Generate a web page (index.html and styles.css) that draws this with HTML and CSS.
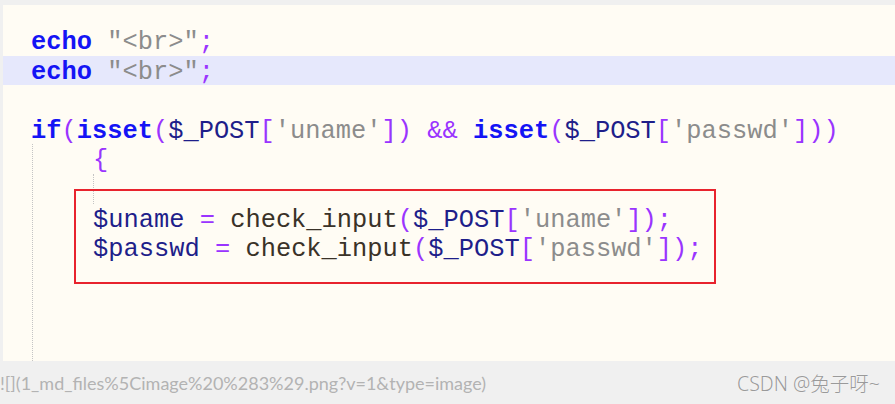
FILE: index.html
```html
<!DOCTYPE html>
<html>
<head>
<meta charset="utf-8">
<link rel="stylesheet" href="styles.css">
</head>
<body>
<div class="page">
  <div class="code">
    <div class="line"><span class="kw">echo</span> <span class="str">"&lt;br&gt;"</span><span class="op">;</span></div>
    <div class="line hl"><span class="kw">echo</span> <span class="str">"&lt;br&gt;"</span><span class="op">;</span></div>
    <div class="line"> </div>
    <div class="line"><span class="kw">if</span><span class="op">(</span><span class="kw">isset</span><span class="op">(</span><span class="var">$_POST</span><span class="op">[</span><span class="str">'uname'</span><span class="op">])</span> <span class="op">&amp;&amp;</span> <span class="kw">isset</span><span class="op">(</span><span class="var">$_POST</span><span class="op">[</span><span class="str">'passwd'</span><span class="op">]))</span></div>
    <div class="block">
      <div class="bline"><span class="op">{</span></div>
      <div class="bline guide"> </div>
      <div class="bline"><span class="var">$uname</span> <span class="op">=</span> <span class="fn">check_input</span><span class="op">(</span><span class="var">$_POST</span><span class="op">[</span><span class="str">'uname'</span><span class="op">]);</span></div>
      <div class="bline"><span class="var">$passwd</span> <span class="op">=</span> <span class="fn">check_input</span><span class="op">(</span><span class="var">$_POST</span><span class="op">[</span><span class="str">'passwd'</span><span class="op">]);</span></div>
    </div>
    <div class="mark"></div>
  </div>
  <div class="footer">
    <span class="path">![](1_md_files%5Cimage%20%283%29.png?v=1&amp;type=image)</span>
    <span class="wm">CSDN @兔子呀~</span>
  </div>
</div>
</body>
</html>
```

FILE: styles.css
```css
html, body {
  margin: 0;
  padding: 0;
  background: #f0f0f0;
}
.page {
  width: 895px;
  height: 404px;
  display: flex;
  flex-direction: column;
  padding: 5px 0 0 3px;
  box-sizing: border-box;
  overflow: hidden;
}
.code {
  position: relative;
  height: 356px;
  background: #fffcf4;
  padding-top: 21px;
  box-sizing: border-box;
  display: flex;
  flex-direction: column;
  font-family: "Liberation Mono", "Courier New", monospace;
  font-size: 25.4px;
  line-height: 29.6px;
  color: #3a3228;
}
.line {
  white-space: pre;
  padding-left: 28px;
  padding-top: 2px;
  height: 29.6px;
  box-sizing: border-box;
}
.hl {
  background: #e6e8fc;
}
.block {
  flex: 1;
  margin-left: 29px;
  border-left: 1px dotted #c4c4c4;
  padding-left: 60px;
}
.bline {
  white-space: pre;
  height: 29.6px;
  padding-top: 2px;
  box-sizing: border-box;
}
.guide {
  border-left: 1px dotted #c4c4c4;
  width: 0;
}
.kw { color: #1414f5; font-weight: bold; }
.str { color: #8c8c8c; }
.op { color: #9a34ff; }
.var { color: #1e1e8a; }
.fn { color: #3a3228; }
.mark {
  position: absolute;
  left: 71px;
  top: 184px;
  width: 642px;
  height: 95px;
  border: 2px solid #e8232d;
  box-sizing: border-box;
}
.footer {
  flex: 1;
  margin-left: -3px;
  display: flex;
  justify-content: space-between;
  align-items: center;
  padding: 0 15px 0 0;
}
.path {
  font-family: Lato, "Open Sans", sans-serif;
  font-size: 18px;
  color: #b3b3b3;
  white-space: nowrap;
}
.wm {
  font-family: "Noto Sans", "Noto Sans CJK SC", sans-serif;
  font-size: 19.5px;
  font-weight: 300;
  color: #9a9a9a;
  text-shadow: 0 0 1px #fff;
}
```
